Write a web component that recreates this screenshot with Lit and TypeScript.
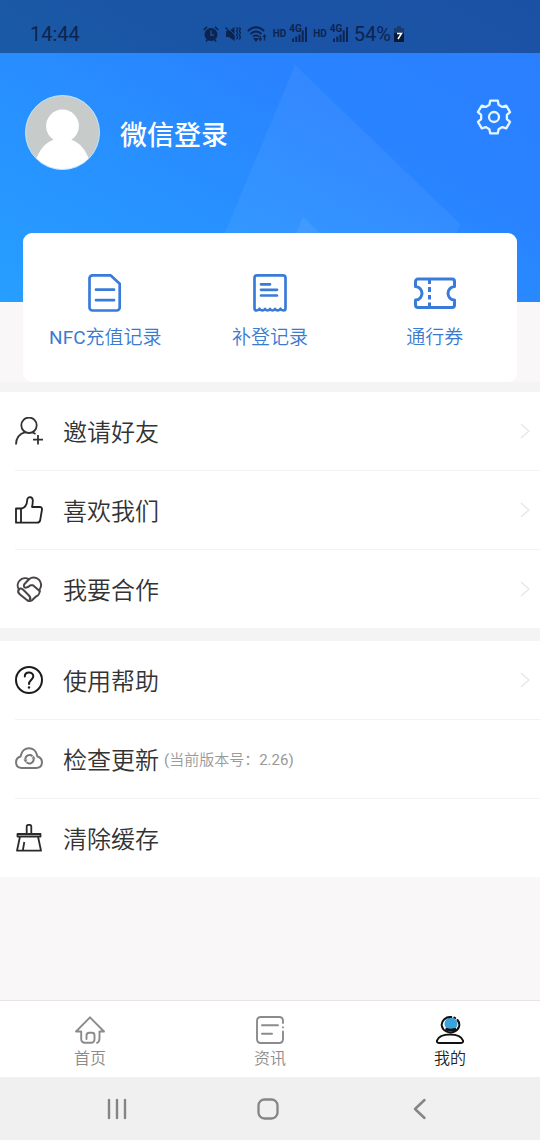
import { LitElement, html, css, nothing, TemplateResult } from "lit";
import { customElement, property } from "lit/decorators.js";

type Icon = TemplateResult;

/* Six-toothed gear outline, one tooth every 60 degrees. */
const gearPoints = Array.from({ length: 6 }, (_, tooth) => {
  const a = (tooth * Math.PI) / 3;
  return [[-4.6, -12.2], [-3.8, -16.3], [3.8, -16.3], [4.6, -12.2]]
    .map(([x, y]) => `${(x * Math.cos(a) - y * Math.sin(a)).toFixed(2)},${(x * Math.sin(a) + y * Math.cos(a)).toFixed(2)}`)
    .join(" ");
}).join(" ");

const icons: Record<string, Icon> = {
  gear: html`<svg viewBox="-18 -18 36 36" width="36" height="36" aria-hidden="true">
    <polygon points=${gearPoints} fill="none" stroke="#e4f6ff" stroke-width="2.3" stroke-linejoin="round" />
    <circle r="5" fill="none" stroke="#e4f6ff" stroke-width="2.3" />
  </svg>`,
  avatar: html`<svg viewBox="0 0 75 75" width="75" height="75" aria-hidden="true">
    <defs><clipPath id="round"><circle cx="37.5" cy="37.5" r="37" /></clipPath></defs>
    <g clip-path="url(#round)">
      <rect width="75" height="75" fill="#c7cccb" />
      <circle cx="37.5" cy="31" r="16.4" fill="#fff" />
      <path d="M10 67C14 55 20 48 28 45C30 44 31 42 30 39H45C44 42 45 44 47 45C55 48 61 55 65 67V75H10Z" fill="#fff" />
    </g>
    <circle cx="37.5" cy="37.5" r="37" fill="none" stroke="#bfe6ff" />
  </svg>`,
  doc: html`<svg viewBox="0 0 44 40" width="44" height="40" fill="none" stroke="#3a7bd9" stroke-width="2.7" stroke-linecap="round" stroke-linejoin="round" aria-hidden="true">
    <path d="M9.500 2.300H27.500L36.700 10.800V34.500a3 3 0 0 1-3 3H9.500a3 3 0 0 1-3-3V5.300a3 3 0 0 1 3-3Z" />
    <path d="M13 16.700H31M13 27.200H31" />
  </svg>`,
  receipt: html`<svg viewBox="0 0 44 40" width="44" height="40" fill="none" stroke="#3a7bd9" stroke-width="2.7" stroke-linecap="round" stroke-linejoin="round" aria-hidden="true">
    <path d="M6.500 35V5a2.700 2.700 0 0 1 2.700-2.700H34.800A2.700 2.700 0 0 1 37.500 5V35Q37.500 37.500 35.500 37.500Q34 37.500 32.500 35.800Q29.500 39 27 36Q24.500 39 22 36Q19.500 39 17 36Q14.500 39 11.500 35.800Q10 37.500 8.500 37.500Q6.500 37.500 6.500 35Z" />
    <path d="M13 11.300H22M13 16.800H29M13 22.500H29" />
  </svg>`,
  ticket: html`<svg viewBox="0 0 44 40" width="44" height="40" fill="none" stroke="#3a7bd9" stroke-width="3" stroke-linejoin="round" aria-hidden="true">
    <path d="M5 6H39a2.500 2.500 0 0 1 2.500 2.500V13.500C37.500 13.500 35 17 35 20.300S37.500 27 41.500 27V32A2.500 2.500 0 0 1 39 34.500H5A2.500 2.500 0 0 1 2.500 32V27C6.500 27 9 23.600 9 20.300S6.500 13.500 2.500 13.500V8.500A2.500 2.500 0 0 1 5 6Z" />
    <path d="M16.500 7V11M16.500 14V19M16.500 22V26.500M16.500 29.500V33" />
  </svg>`,
  invite: html`<svg viewBox="0 0 28 28" width="28" height="28" fill="none" stroke="#333" stroke-width="1.8" aria-hidden="true">
    <circle cx="14" cy="8.300" r="7.700" />
    <path d="M10.500 15.200C5 16.700 1 21 1 27.500M17.500 15.200L20.500 17M18 22.700H28M23 18V27.500" />
  </svg>`,
  like: html`<svg viewBox="0 0 28 28" width="28" height="28" fill="none" stroke="#222" stroke-width="1.8" stroke-linejoin="round" aria-hidden="true">
    <path d="M1 12.500H6V26.700H1ZM6 12.500C10 12 12 9 12.200 4C12.300 .200 17.800 .200 17.800 4.500C17.800 7 17.500 9 17 11H24.500Q27.300 11 27 13.500L25.200 24Q24.800 26.700 22 26.700H6Z" />
  </svg>`,
  partner: html`<svg viewBox="0 0 28 28" width="28" height="28" fill="none" stroke="#4a4446" stroke-width="2" stroke-linejoin="round" stroke-linecap="round" aria-hidden="true">
    <path d="M3.800 14.500A7.400 7.400 0 0 1 14 4.300A7.400 7.400 0 0 1 24.600 14.500C25.200 17.500 23.500 20.500 21 21.500L17 25.300Q15 26.500 12.500 25.500L5 19.500Q2 17 3.800 14.500Z" />
    <path d="M14 4.300L9.300 9.300Q8 12 10.500 12.700Q13 12.700 15.500 10.300H18L24.600 16M3.800 14.500Q5.500 12.500 8 14.500L14 20.500Q16.500 23.500 14.500 25.500" />
  </svg>`,
  help: html`<svg viewBox="0 0 28 28" width="28" height="28" fill="none" stroke="#1c1c1c" stroke-width="2" aria-hidden="true">
    <circle cx="14" cy="14" r="13" />
    <path d="M9.800 10.500C9.800 5.300 18.300 5.300 18.300 10.300C18.300 13.500 14 14 14 18" stroke-linecap="round" />
    <circle cx="14" cy="21.500" r="1.200" fill="#1c1c1c" stroke="none" />
  </svg>`,
  update: html`<svg viewBox="0 0 28 28" width="28" height="28" fill="none" stroke="#777" stroke-width="2" aria-hidden="true">
    <path d="M7 23C-.500 23-.800 13.500 5.500 11.500C7.500 .500 20.500 .500 22.500 11.500C28.800 13.500 28.500 23 21 23Z" />
    <path d="M10.300 14.500A4.300 4.300 0 0 1 17.500 11.200M18.700 14A4.300 4.300 0 0 1 11.500 17.300" />
    <path d="M16.500 13.700H20.500L18.500 10.700ZM8.500 14.600H12.500L10.500 17.800Z" fill="#777" stroke="none" />
  </svg>`,
  clean: html`<svg viewBox="0 0 28 28" width="28" height="28" fill="none" stroke="#2a2a2a" stroke-width="1.800" stroke-linejoin="round" aria-hidden="true">
    <path d="M11.700 10V2.500Q11.700 .800 14 .800T16.300 2.500V10M2.500 10H25.500V12.500H2.500ZM5 12.500L2 26.700H26L23 12.500M9.300 18L7.800 26.700" />
  </svg>`,
  home: html`<svg viewBox="0 0 30 28" width="30" height="28" fill="none" stroke="#8b8b8b" stroke-width="1.900" stroke-linecap="round" stroke-linejoin="round" aria-hidden="true">
    <path d="M11.500 23V19.500A2.700 2.700 0 0 1 14.200 16.800H17A2.500 2.500 0 0 1 19.500 19.300V23.500A3.300 3.300 0 0 1 16.200 26.800H9.700A3.500 3.500 0 0 1 6.200 23.300V15.500H1L15 1.300L29 15.500H24.500V22Q24.500 26 22 26.800" />
  </svg>`,
  news: html`<svg viewBox="0 0 28 28" width="28" height="28" fill="none" stroke="#8b8b8b" stroke-width="1.900" stroke-linecap="round" aria-hidden="true">
    <path d="M27 7V5Q27 1 23 1H5Q1 1 1 5V23Q1 27 5 27H23Q27 27 27 23V15.500M27 11.300V11.400M6 9.300H22M6 17.700H16" />
  </svg>`,
  me: html`<svg viewBox="0 0 28 28" width="28" height="28" fill="none" stroke="#111" stroke-width="2" stroke-linecap="round" aria-hidden="true">
    <circle cx="15" cy="8" r="6.500" fill="#3ba3dc" stroke="none" />
    <path d="M15.300 1A8.800 7.700 0 1 0 21.500 4M18.300 1.500L19.200 2" />
    <path d="M10.500 13.300Q14.500 15 19 13.300" stroke-width="2.600" />
    <path d="M3.500 27H24.500Q27.500 27 27 24.500C24 16.500 4 16.500 1 24.500Q.500 27 3.500 27Z" />
  </svg>`,
  chevron: html`<svg viewBox="0 0 10 16" width="10" height="16" fill="none" stroke="#e8e8e8" stroke-width="1.500" aria-hidden="true"><path d="M1 1L9 8L1 15" /></svg>`,
  recents: html`<svg viewBox="0 0 22 22" width="22" height="22" stroke="#858585" stroke-width="2.400" stroke-linecap="round" aria-hidden="true"><path d="M3 2V20M11 2V20M19 2V20" /></svg>`,
  homeKey: html`<svg viewBox="0 0 22 22" width="22" height="22" fill="none" stroke="#858585" stroke-width="2.300" aria-hidden="true"><rect x="1.500" y="1.500" width="19" height="19" rx="6" /></svg>`,
  back: html`<svg viewBox="0 0 22 22" width="22" height="22" fill="none" stroke="#858585" stroke-width="2.500" stroke-linecap="round" stroke-linejoin="round" aria-hidden="true"><path d="M15.500 2L6 11L15.500 20" /></svg>`,
  alarm: html`<svg viewBox="0 0 16 16" width="16" height="16" aria-hidden="true">
    <circle cx="8" cy="8.500" r="6.500" fill="#0d2450" />
    <path d="M.700 4L4 .900M15.300 4L12 .900M3 15.500L4.500 13.500M13 15.500L11.500 13.500" stroke="#0d2450" stroke-width="1.600" />
    <path d="M8 4.500V9H11" fill="none" stroke="#1a4f97" stroke-width="1.400" />
  </svg>`,
  mute: html`<svg viewBox="0 0 16 16" width="16" height="16" fill="#0d2450" stroke="#0d2450" aria-hidden="true">
    <path d="M1 5H4L9.500 1V15L4 11H1Z" stroke="none" />
    <path d="M2 1L10.500 9.500" stroke="#1a4f97" stroke-width="1" />
    <path d="M.500 1.500L10 12" stroke-width="1.300" />
    <path d="M11.500 1.500L12.800 3L11.500 5L12.800 7L11.500 9L12.800 11L11.500 13.500M14.300 1.500L15.500 3L14.300 5L15.500 7L14.300 9L15.500 11L14.300 13.500" fill="none" stroke-width="1.300" />
  </svg>`,
  wifi: html`<svg viewBox="0 0 20 16" width="20" height="16" fill="none" stroke="#0d2450" stroke-width="1.700" aria-hidden="true">
    <path d="M.800 5Q9 -2.500 17.200 5M3.500 8Q9 3 14.500 8M6 10.700Q9 8 12 10.700" />
    <path d="M7.800 12.800H10.200L9 14.500Z" />
    <path d="M13.300 10V13.500M17.500 14.500V10" stroke-width="1.300" />
    <path d="M11.500 12.500L13.300 15.500L15.100 12.500ZM15.700 11L17.500 8L19.300 11Z" fill="#0d2450" stroke="none" />
  </svg>`,
  bars: html`<svg viewBox="0 0 15 16" width="15" height="16" stroke="#0d2450" stroke-width="2" aria-hidden="true"><path d="M1 16V12.500M4.300 16V10.500M7.500 16V8.500M10.700 16V4.500M14 16V1" /></svg>`,
  battery: html`<svg viewBox="0 0 12 16" width="12" height="16" aria-hidden="true">
    <path d="M4 0H8V2H11V8H1V2H4Z" fill="#193b70" /><path d="M1 7H11V16H1Z" fill="#081a38" />
    <path d="M4 7.500H8.500L5 13" fill="none" stroke="#fff" stroke-width="1.500" />
  </svg>`,
};

/* Han characters are set in a lighter weight than the Latin letters and digits beside them. */
const mixed = (text: string) =>
  text.split(/([A-Za-z0-9.()]+)/).filter(Boolean).map((part) =>
    /^[A-Za-z0-9.()]/.test(part) ? html`<span class="latin">${part}</span>` : part);

const reset = css`
  * { box-sizing: border-box; }
  svg { display: block; flex: none; }
  button { font: inherit; color: inherit; background: none; border: 0; margin: 0; padding: 0; cursor: pointer; }
  a { color: inherit; text-decoration: none; }
  .latin { font-weight: 400; }
`;

@customElement("status-bar")
export class StatusBar extends LitElement {
  static styles = [reset, css`
    :host { display: block; position: relative; }
    .bar {
      display: flex; align-items: center; justify-content: space-between;
      height: 53px; padding: 14px 135px 0 30px;
      background: rgba(5, 15, 30, 0.4); color: #0d2450; font-size: 20px; line-height: 24px;
    }
    .icons { display: flex; align-items: center; gap: 6px; }
    .hd { font-size: 10px; font-weight: 700; line-height: 16px; }
    .signal { position: relative; }
    .net { position: absolute; left: -3px; top: -2px; font-size: 10px; font-weight: 700; line-height: 10px; }
    .battery { display: flex; align-items: center; gap: 2px; }
  `];

  private signal() {
    return html`<span class="hd">HD</span><span class="signal">${icons.bars}<span class="net">4G</span></span>`;
  }

  render() {
    return html`<div class="bar">
      <time>14:44</time>
      <div class="icons">
        ${icons.alarm}${icons.mute}${icons.wifi}${this.signal()}${this.signal()}
        <span class="battery">54%${icons.battery}</span>
      </div>
    </div>`;
  }
}

@customElement("menu-row")
export class MenuRow extends LitElement {
  @property() icon = "";
  @property() label = "";
  @property() note = "";
  @property({ type: Boolean }) arrow = false;

  static styles = [reset, css`
    :host { display: block; }
    .row {
      display: flex; align-items: center; width: 100%; height: 78px; padding: 0 10px 0 15px;
      font-size: 24px; line-height: 32px; color: #333; text-align: left; font-weight: 350;
    }
    .label { margin-left: 20px; padding-top: 4px; }
    .note { margin-left: 5px; padding-top: 1px; font-size: 15px; color: #999; }
    .arrow { margin-left: auto; }
  `];

  render() {
    return html`<button class="row">
      ${icons[this.icon]}
      <span class="label">${this.label}</span>
      ${this.note ? html`<span class="note">${mixed(this.note)}</span>` : nothing}
      ${this.arrow ? html`<span class="arrow">${icons.chevron}</span>` : nothing}
    </button>`;
  }
}

@customElement("app-root")
export class AppRoot extends LitElement {
  static styles = [reset, css`
    :host {
      display: flex; flex-direction: column; min-height: 100vh; background: #f9f7f8;
      font-family: Roboto, "Noto Sans CJK SC", sans-serif;
    }
    .hero {
      position: relative; height: 302px;
      background: linear-gradient(to top right, #269fff 0%, #288fff 38%, #2983ff 62%, #2b7eff 100%);
    }
    .art { position: absolute; inset: 0; width: 100%; height: 100%; }
    .profile { position: relative; display: flex; align-items: center; padding: 42px 28px 0 25px; }
    .login { display: flex; align-items: center; gap: 20px; color: #fff; font-size: 27px; font-weight: 500; line-height: 36px; }
    .name { padding-top: 6px; }
    .settings { margin: 0 0 32px auto; }
    .card {
      position: relative; display: grid; grid-template-columns: repeat(3, 1fr);
      margin: -69px 23px 0; height: 149px; background: #fff; border-radius: 9px;
    }
    .shortcut {
      display: flex; flex-direction: column; align-items: center; gap: 11px; padding-top: 40px;
      color: #3a7bd0; font-size: 19px; line-height: 28px; font-weight: 350;
    }
    .menu { margin: 0; padding: 0; list-style: none; background: #fff; border-top: 10px solid #f4f4f4; }
    .menu + .menu { border-top-width: 13px; }
    .item + .item::before { content: ""; display: block; height: 1px; margin-left: 15px; background: #f3f3f3; }
    .tabs {
      display: grid; grid-template-columns: repeat(3, 1fr); margin-top: auto; height: 77px;
      background: #fff; border-top: 1px solid #e6e4e5;
    }
    .tab {
      display: flex; flex-direction: column; align-items: center; gap: 4px; padding-top: 15px;
      color: #8b8b8b; font-size: 16px; line-height: 22px; font-weight: 350;
    }
    .current { color: #222; }
    .keys { display: grid; grid-template-columns: repeat(3, 1fr); height: 63px; padding: 0 44px 0 41px; background: #f0f0f0; }
    .key { display: grid; place-items: center; }
  `];

  private shortcuts = [["doc", "NFC充值记录"], ["receipt", "补登记录"], ["ticket", "通行券"]];
  private groups = [
    [
      { icon: "invite", label: "邀请好友", arrow: true },
      { icon: "like", label: "喜欢我们", arrow: true },
      { icon: "partner", label: "我要合作", arrow: true },
    ],
    [
      { icon: "help", label: "使用帮助", arrow: true },
      { icon: "update", label: "检查更新", note: "(当前版本号：2.26)" },
      { icon: "clean", label: "清除缓存" },
    ],
  ] as { icon: string; label: string; note?: string; arrow?: boolean }[][];
  private tabs = [["home", "首页"], ["news", "资讯"], ["me", "我的"]];
  private keys = [["recents", "最近任务"], ["homeKey", "主屏幕"], ["back", "返回"]];

  render() {
    return html`
      <header class="hero">
        <svg class="art" viewBox="0 0 540 302" preserveAspectRatio="xMidYMid slice" aria-hidden="true">
          <path d="M295 65L460 224L430 302H196Z" fill="#fff" fill-opacity=".055" />
          <path d="M303 217L390 302H268Z" fill="#fff" fill-opacity=".07" />
        </svg>
        <status-bar></status-bar>
        <div class="profile">
          <button class="login">${icons.avatar}<span class="name">微信登录</span></button>
          <button class="settings" aria-label="设置">${icons.gear}</button>
        </div>
      </header>
      <section class="card">
        ${this.shortcuts.map(([icon, label]) => html`<a class="shortcut" href="#${icon}">${icons[icon]}<span>${mixed(label)}</span></a>`)}
      </section>
      ${this.groups.map((rows) => html`<ul class="menu">
        ${rows.map((r) => html`<li class="item">
          <menu-row .icon=${r.icon} .label=${r.label} .note=${r.note ?? ""} .arrow=${!!r.arrow}></menu-row>
        </li>`)}
      </ul>`)}
      <nav class="tabs">
        ${this.tabs.map(([icon, label]) => html`<a class="tab ${icon === "me" ? "current" : ""}" href="#${icon}">${icons[icon]}<span>${label}</span></a>`)}
      </nav>
      <div class="keys">
        ${this.keys.map(([icon, label]) => html`<button class="key" aria-label=${label}>${icons[icon]}</button>`)}
      </div>
    `;
  }
}
